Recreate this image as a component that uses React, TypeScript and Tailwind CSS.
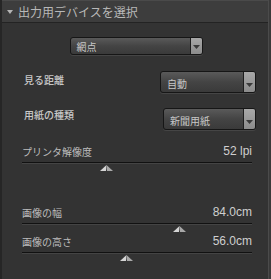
import React from "react";

const jp = { fontFamily: '"Noto Sans CJK JP", "Noto Sans", sans-serif' };
const num = { fontFamily: '"Liberation Sans", Arial, sans-serif' };

function Arrow({ size = 5 }: { size?: number }) {
  return (
    <svg width={size + 2} height={size} viewBox="0 0 7 5">
      <path d="M0 0 L7 0 L3.5 4 Z" fill="#3a3a3a" />
    </svg>
  );
}

function Select({
  label,
  className,
  textClass,
}: {
  label: string;
  className: string;
  textClass?: string;
}) {
  return (
    <div
      className={`flex rounded-[3px] border border-[#161616] bg-gradient-to-b from-[#5a5a5a] via-[#444] to-[#3a3a3a] shadow-[0_1px_0_#454545] ${className}`}
    >
      <div
        className={`flex-1 flex pl-[6px] text-[10px] text-[#c8c8c8] ${textClass ?? "items-center"}`}
        style={jp}
      >
        {label}
      </div>
      <div className="w-[12px] flex items-end justify-center pb-[4px] bg-gradient-to-b from-[#a8a8a8] to-[#8c8c8c] border-l border-[#1e1e1e] rounded-r-[2px]">
        <Arrow />
      </div>
    </div>
  );
}

function Slider({
  label,
  value,
  pos,
}: {
  label: string;
  value: string;
  pos: number;
}) {
  return (
    <div className="flex flex-col">
      <div className="flex justify-between items-end h-[14px]">
        <span className="text-[10px] text-[#bdbdbd] leading-none" style={jp}>
          {label}
        </span>
        <span className="text-[12px] text-[#cfcfcf] leading-none" style={num}>
          {value}
        </span>
      </div>
      <div className="mt-[5px] h-[2px] bg-[#111] border-b border-[#444]" />
      <div className="relative h-[8px]">
        <svg
          className="absolute top-[1px]"
          style={{ left: pos }}
          width="13"
          height="6"
          viewBox="0 0 13 6"
        >
          <path d="M6.5 0 L0 6 L6 6 Z" fill="#d4d4d4" />
          <path d="M6.5 0 L13 6 L7 6 Z" fill="#a9a9a9" />
        </svg>
      </div>
    </div>
  );
}

export default function App() {
  return (
    <div className="w-[271px] h-[279px] bg-[#333333] border-l-2 border-l-[#262626] flex">
      <div className="flex-1 flex flex-col">
        <div className="h-[23px] bg-[#3d3d3d] border-t border-t-[#4a4a4a] border-b border-b-[#232323] flex items-center pl-[5px] gap-[5px]">
          <svg width="6" height="4" viewBox="0 0 6 4">
            <path d="M0 0 L6 0 L3 4 Z" fill="#b5b5b5" />
          </svg>
          <span
            className="text-[12px] text-[#b8b8b8] leading-none"
            style={jp}
          >
            出力用デバイスを選択
          </span>
        </div>

        <div className="flex justify-center pt-[14px]">
          <Select label="網点" className="w-[133px] h-[18px] ml-[2px]" />
        </div>

        <div className="flex items-start justify-between pl-[22px] pr-[12px] mt-[16px]">
          <span className="text-[10px] text-[#c8c8c8] mt-[1px] font-medium" style={jp}>
            見る距離
          </span>
          <Select
            label="自動"
            className="w-[96px] h-[22px]"
            textClass="items-end pb-[1px]"
          />
        </div>

        <div className="flex items-start justify-between pl-[22px] pr-[12px] mt-[15px]">
          <span className="text-[10px] text-[#c8c8c8] mt-[-1px] font-medium" style={jp}>
            用紙の種類
          </span>
          <Select
            label="新聞用紙"
            className="w-[93px] h-[22px]"
            textClass="items-end pb-[1px]"
          />
        </div>

        <div className="flex flex-col pl-[20px] pr-[16px] mt-[13px]">
          <Slider label="プリンタ解像度" value="52 lpi" pos={78} />
          <div className="h-[32px]" />
          <Slider label="画像の幅" value="84.0cm" pos={151} />
          <Slider label="画像の高さ" value="56.0cm" pos={98} />
        </div>
      </div>
      <div className="w-[3px] bg-[#3a3a3a] border-l border-l-[#4b4b4b]" />
    </div>
  );
}
